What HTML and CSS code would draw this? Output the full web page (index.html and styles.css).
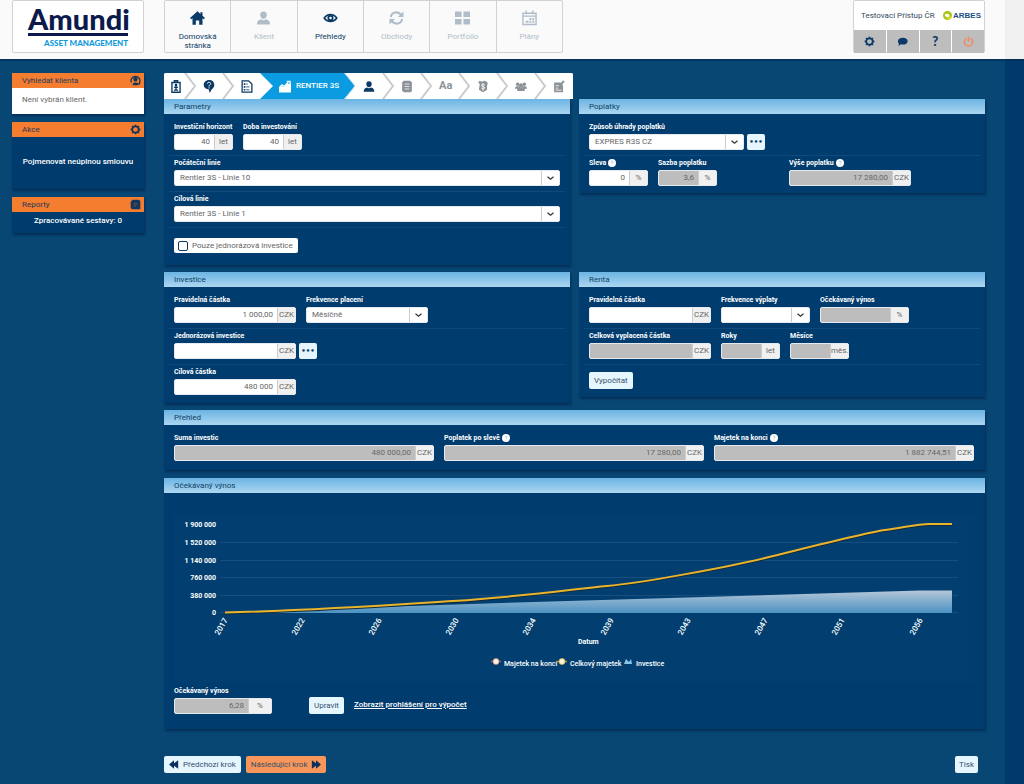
FILE: index.html
```html
<!DOCTYPE html>
<html lang="cs">
<head>
<meta charset="utf-8">
<meta name="viewport" content="width=device-width, initial-scale=1">
<title>Rentier 3S – Amundi</title>
<link rel="stylesheet" href="styles.css">
</head>
<body>
<svg class="defs" aria-hidden="true">
  <symbol id="down" viewBox="0 0 8 8"><path d="M1 2.800 4 5.300 7 2.800" fill="none" stroke="currentColor" stroke-width="1.200"/></symbol>
  <symbol id="gear" viewBox="0 0 16 16"><circle cx="8" cy="8" r="4.600" fill="none" stroke="currentColor" stroke-width="2.400"/><path d="M8 1v3M8 12v3M1 8h3M12 8h3M3 3l2 2M11 11l2 2M13 3l-2 2M3 13l2-2" stroke="currentColor" stroke-width="2.600" fill="none"/></symbol>
  <symbol id="person" viewBox="0 0 16 16"><path d="M8 1c2.300 0 3.800 1.600 3.600 3.900C11.400 7.300 10 9 8 9S4.600 7.300 4.400 4.900C4.200 2.600 5.700 1 8 1zM1 15c0-3.500 1.200-4.900 4.300-5.700 1.500 1.300 3.900 1.300 5.400 0C13.800 10.100 15 11.500 15 15z" fill="currentColor"/></symbol>
  <symbol id="help" viewBox="0 0 8 8"><circle cx="4" cy="4" r="4" fill="#fff"/><path d="M2.900 3.200c0-1.700 2.300-1.500 2.200-.1C5 3.900 4 3.900 4 4.800M4 5.600v.7" fill="none" stroke="#9db2c8" stroke-width=".7"/></symbol>
  <symbol id="chev" viewBox="0 0 13 26"><path d="M1 0 11 13 1 26" fill="none" stroke="#c9cccf" stroke-width="2"/></symbol>
  <symbol id="rewind" viewBox="0 0 12 10"><path d="M6 0v3.500L11 0v10L6 6.500V10L0 5z" fill="currentColor"/></symbol>
  <symbol id="forward" viewBox="0 0 12 10"><path d="M6 0v3.500L1 0v10l5-3.500V10l6-5z" fill="currentColor"/></symbol>
</svg>

<div class="page">
  <header class="top">
    <a class="logo" href="#"><span class="logo-name">Amundi</span><span class="logo-sub">ASSET MANAGEMENT</span></a>
    <nav class="nav">
      <a href="#"><svg viewBox="0 0 18 16"><path d="M9 0 0 8l1.500 1.500L3 8.200V16h4v-5h4v5h4V8.200l1.500 1.300L18 8l-3-2.700V1h-2.500v2.200z" fill="currentColor"/></svg>Domovská<br>stránka</a>
      <a class="off" href="#"><svg><use href="#person"/></svg>Klient</a>
      <a href="#"><svg viewBox="0 0 18 16"><path d="M1.500 8C5 2.500 13 2.500 16.500 8 13 13.500 5 13.500 1.500 8z" fill="none" stroke="currentColor" stroke-width="2"/><circle cx="9" cy="8" r="3.700" fill="currentColor"/><circle cx="9" cy="8" r="1.500" fill="#fff"/></svg>Přehledy</a>
      <a class="off" href="#"><svg viewBox="0 0 16 16"><path d="M2 7C2.600 1.500 9.500.500 13 4.500M14 9c-.600 5.500-7.500 6.500-11 2.500" fill="none" stroke="currentColor" stroke-width="2.200"/><path d="M15.500 1v6h-6zM.5 15V9h6z" fill="currentColor"/></svg>Obchody</a>
      <a class="off" href="#"><svg viewBox="0 0 16 16"><path d="M0 1h7v6H0zM9 1h7v6H9zM0 9h7v6H0zM9 9h7v6H9z" fill="currentColor"/></svg>Portfolio</a>
      <a class="off" href="#"><svg viewBox="0 0 16 16"><path d="M1 3h14v12H1zM1 6h14M4.500 0v4M11.500 0v4" fill="none" stroke="currentColor" stroke-width="1.500"/><path d="M8 8h2v2H8zM11 8h2v2h-2zM8 11h2v2H8zM11 11h2v2h-2zM4 11h3v2H4z" fill="currentColor"/></svg>Plány</a>
    </nav>
    <div class="user">
      <div class="user-name"><span>Testovací Přístup ČR</span>
        <span class="arbes"><svg viewBox="0 0 10 10"><circle cx="5" cy="5" r="5" fill="#a9c51b"/><path d="M2 4C3 2.500 6 2.500 7 4.500c.3 1.200-.5 2.300-1.800 2.500C3.500 7 2 5.800 2 4z" fill="#fff"/><path d="M4.500 9.800C4.500 7 7 5.500 9.900 5.800 9.500 8.500 7.500 10 4.500 9.800z" fill="#d5dc2b"/></svg>ARBES</span></div>
      <div class="user-tools">
        <button aria-label="Nastavení"><svg><use href="#gear"/></svg></button>
        <button aria-label="Zprávy"><svg viewBox="0 0 16 16"><path d="M8.500 2.500c4 0 7 2.200 7 5s-3 5-7 5c-1 0-2-.1-2.800-.4C4.500 13.200 3 14 1.500 14c.8-.8 1.300-1.800 1.400-2.900C1.800 10.200 1.300 9 1.300 7.500c0-2.800 3.200-5 7.200-5z" fill="currentColor"/></svg></button>
        <button class="q" aria-label="Nápověda">?</button>
        <button class="power" aria-label="Odhlásit"><svg viewBox="0 0 16 16"><path d="M5 3.500a6 6 0 1 0 6 0M8 1v7" fill="none" stroke="currentColor" stroke-width="2.200"/></svg></button>
      </div>
    </div>
  </header>

  <div class="content">
    <aside class="side">
      <section class="box">
        <h2>Vyhledat klienta<svg viewBox="0 0 16 16"><path d="M2 11A6.500 6.500 0 1 1 14 11M14 9v4h-4" fill="none" stroke="currentColor" stroke-width="1.800"/><path d="M8 3c2 0 3 1.300 3 3s-1.200 3.500-3 3.500S5 7.700 5 6s1-3 3-3zM4 15c0-3 1-4 4-4s4 1 4 4z" fill="currentColor"/></svg></h2>
        <p class="find">Není vybrán klient.</p>
      </section>
      <section class="box">
        <h2>Akce<svg><use href="#gear"/></svg></h2>
        <p class="action">Pojmenovat neúplnou smlouvu</p>
      </section>
      <section class="box">
        <h2>Reporty<svg viewBox="0 0 16 16"><path d="M4 1h9l2 2v12H3l-2-2V4z" fill="currentColor"/><path d="M5 7h6M5 10h4" stroke="#8a5a45" stroke-width="1.200"/></svg></h2>
        <p class="report">Zpracovávané sestavy: 0</p>
      </section>
    </aside>

    <main class="main">
      <nav class="steps">
        <button aria-label="Klient"><svg class="ico" viewBox="0 0 14 16"><path d="M2 3h10v12H2zM5 3V1h4v2" fill="none" stroke="currentColor" stroke-width="1.700"/><circle cx="7" cy="6.300" r="1.700" fill="currentColor"/><path d="M4.500 9h5M7 7.500V12M4.500 12.500h5" stroke="currentColor" stroke-width="1.600"/></svg><svg class="chev"><use href="#chev"/></svg></button>
        <button aria-label="Dotazník"><svg class="ico" viewBox="0 0 14 16"><path d="M7 0c4 0 6.500 2.500 6.500 6S11 10.500 10 12l-2 4-1.500-4.500C3 11 .5 9 .5 6S3 0 7 0z" fill="currentColor"/><path d="M5 4.500c.2-2.500 4-2.300 4 0C9 6 7 6 7 8M7 9v1.400" fill="none" stroke="#fff" stroke-width="1.200"/></svg><svg class="chev"><use href="#chev"/></svg></button>
        <button class="before" aria-label="Modelace"><svg class="ico" viewBox="0 0 14 16"><path d="M1 1h8l4 4v10H1z" fill="none" stroke="currentColor" stroke-width="1.600"/><path d="M3 4h2v2H3zM3 7.500h2v2H3zM3 11h2v2H3z" fill="currentColor"/><path d="M6 5h2M6 8.500h4M6 12h4" stroke="currentColor"/></svg><svg class="chev" viewBox="0 0 13 26"><path d="M13 0v26H0L13 13 0 0z" fill="#0a9be0"/></svg></button>
        <button class="active"><svg class="ico" viewBox="0 0 14 14"><path d="M0 14V9l3-3 3 2 4-5 1.500 1L14 2v12z" fill="currentColor"/><path d="M0 8.500 3.500 5 6 7l5.500-6M9 .8h4v4" fill="none" stroke="currentColor" stroke-width="1.300"/></svg><span>RENTIER 3S</span><svg class="chev" viewBox="0 0 13 26"><path d="M0 0h13v26H0L11 13z" fill="#fff"/><path d="m1 0 10 13L1 26" fill="none" stroke="#c4dceb"/></svg></button>
        <button aria-label="Osoba"><svg class="ico"><use href="#person"/></svg><svg class="chev"><use href="#chev"/></svg></button>
        <button class="off" aria-label="Dokument"><svg class="ico" viewBox="0 0 14 16"><path d="M3 1h8l2 2v10l-1 2H3l-2-2V3z" fill="currentColor"/><path d="M4 5h6M4 8h6M4 11h6" stroke="#fff" stroke-width=".9"/></svg><svg class="chev"><use href="#chev"/></svg></button>
        <button class="off"><span class="aa">Aa</span><svg class="chev"><use href="#chev"/></svg></button>
        <button class="off" aria-label="Platba"><svg class="ico" viewBox="0 0 14 16"><path d="M3 5 1 3l2-2 3 1 2-1 4 1 1 3-1 1v6l-5 3-5-3z" fill="currentColor"/><path d="M9 6C8 4.700 5 5 5.200 6.700 5.500 8.500 9 7.500 9 9.700 9 11.200 6 11.400 5 10M7 4v9" fill="none" stroke="#fff" stroke-width="1.100"/></svg><svg class="chev"><use href="#chev"/></svg></button>
        <button class="off" aria-label="Osoby"><svg class="ico" viewBox="0 0 16 16"><circle cx="3.500" cy="5" r="2.300" fill="currentColor"/><circle cx="12.500" cy="5" r="2.300" fill="currentColor"/><circle cx="8" cy="6.500" r="2.800" fill="currentColor"/><path d="M0 11c0-3 2-3.500 5-3.200 2 2 4 2 6 0 3-.3 5 .2 5 3.200h-3v3H3v-3z" fill="currentColor"/></svg><svg class="chev"><use href="#chev"/></svg></button>
        <button class="off" aria-label="Podpis"><svg class="ico" viewBox="0 0 14 16"><path d="M1 3h8l3 4v8H1z" fill="currentColor"/><path d="m6 10 7-9" stroke="currentColor" stroke-width="2.500"/><path d="M3 7h4M3 10h3M3 12.500h7" stroke="#fff"/></svg></button>
      </nav>

      <div class="panels">
        <section class="panel">
          <h2>Parametry</h2>
          <div class="row">
            <div class="field w-s"><label for="hor">Investiční horizont</label><div class="group"><input id="hor" value="40"><span>let</span></div></div>
            <div class="field w-s"><label for="doba">Doba investování</label><div class="group"><input id="doba" value="40"><span>let</span></div></div>
          </div>
          <div class="row">
            <div class="field w-full"><label for="poc">Počáteční linie</label><div class="select"><select id="poc"><option>Rentier 3S - Linie 10</option></select><svg><use href="#down"/></svg></div></div>
          </div>
          <div class="row">
            <div class="field w-full"><label for="cil">Cílová linie</label><div class="select"><select id="cil"><option>Rentier 3S - Linie 1</option></select><svg><use href="#down"/></svg></div></div>
          </div>
          <label class="check"><input type="checkbox">Pouze jednorázová investice</label>
        </section>
        <section class="panel">
          <h2>Poplatky</h2>
          <div class="row">
            <div class="field w-xl"><label for="zpu">Způsob úhrady poplatků</label><div class="select"><select id="zpu"><option>EXPRES R3S CZ</option></select><svg><use href="#down"/></svg></div></div>
            <button class="more" aria-label="Více">•••</button>
          </div>
          <div class="row">
            <div class="field w-s"><label for="sle">Sleva <svg><use href="#help"/></svg></label><div class="group"><input id="sle" value="0"><span>%</span></div></div>
            <div class="field w-s"><label for="saz">Sazba poplatku</label><div class="group"><input id="saz" value="3,6" readonly><span>%</span></div></div>
            <div class="field w-l skip"><label for="vys">Výše poplatku <svg><use href="#help"/></svg></label><div class="group"><input id="vys" value="17 280,00" readonly><span>CZK</span></div></div>
          </div>
        </section>
      </div>

      <div class="panels">
        <section class="panel end">
          <h2>Investice</h2>
          <div class="row">
            <div class="field w-l"><label for="pra">Pravidelná částka</label><div class="group"><input id="pra" value="1 000,00"><span>CZK</span></div></div>
            <div class="field w-l"><label for="fre">Frekvence placení</label><div class="select"><select id="fre"><option>Měsíčně</option></select><svg><use href="#down"/></svg></div></div>
          </div>
          <div class="row">
            <div class="field w-l"><label for="jed">Jednorázová investice</label><div class="group"><input id="jed"><span>CZK</span></div></div>
            <button class="more" aria-label="Více">•••</button>
          </div>
          <div class="row">
            <div class="field w-l"><label for="cca">Cílová částka</label><div class="group"><input id="cca" value="480 000"><span>CZK</span></div></div>
          </div>
        </section>
        <section class="panel">
          <h2>Renta</h2>
          <div class="row">
            <div class="field w-l"><label for="rpr">Pravidelná částka</label><div class="group"><input id="rpr"><span>CZK</span></div></div>
            <div class="field w-m"><label for="rfr">Frekvence výplaty</label><div class="select"><select id="rfr"><option></option></select><svg><use href="#down"/></svg></div></div>
            <div class="field w-m"><label for="roc">Očekávaný výnos</label><div class="group"><input id="roc" readonly><span>%</span></div></div>
          </div>
          <div class="row">
            <div class="field w-l"><label for="cel">Celková vyplacená částka</label><div class="group"><input id="cel" readonly><span>CZK</span></div></div>
            <div class="field w-s"><label for="rok">Roky</label><div class="group"><input id="rok" readonly><span>let</span></div></div>
            <div class="field w-s"><label for="mes">Měsíce</label><div class="group"><input id="mes" readonly><span>měs.</span></div></div>
          </div>
          <button class="btn calc">Vypočítat</button>
        </section>
      </div>

      <section class="panel sum">
        <h2>Přehled</h2>
        <div class="row">
          <div class="field grow"><label for="sum">Suma investic</label><div class="group"><input id="sum" value="480 000,00" readonly><span>CZK</span></div></div>
          <div class="field grow"><label for="pop">Poplatek po slevě <svg><use href="#help"/></svg></label><div class="group"><input id="pop" value="17 280,00" readonly><span>CZK</span></div></div>
          <div class="field grow"><label for="maj">Majetek na konci <svg><use href="#help"/></svg></label><div class="group"><input id="maj" value="1 882 744,51" readonly><span>CZK</span></div></div>
        </div>
      </section>

      <section class="panel yield">
        <h2>Očekávaný výnos</h2>
        <svg class="chart" viewBox="0 0 801 168" role="img" aria-label="Očekávaný výnos">
          <defs><linearGradient id="area" x1="0" y1="0" x2="0" y2="1"><stop offset="0" stop-color="#b4c6d8"/><stop offset="1" stop-color="#4b92c3"/></linearGradient></defs>
          <path class="grid" d="M46 28.500H784M46 46.500H784M46 63.500H784M46 81.500H784M46 98.500H784"/>
          <path d="M51 98 360 88 746 76.500H778V99H51z" fill="url(#area)"/>
          <path class="shadow" d="M51 99.500C150 97 202 93 279 88S400 76 433 73 550 55 591 45 690 20 711 17 745 11 755 11H778"/>
          <path class="line" d="M51 98.500C150 96 202 92 279 87S400 75 433 72 550 54 591 44 690 19 711 16 745 10 755 10H778"/>
          <g text-anchor="end"><text x="42" y="13">1 900 000</text><text x="42" y="31">1 520 000</text><text x="42" y="49">1 140 000</text><text x="42" y="66">760 000</text><text x="42" y="84">380 000</text><text x="42" y="101">0</text></g>
          <g class="years" text-anchor="end"><text transform="translate(54 106) rotate(-60)">2017</text><text transform="translate(131 106) rotate(-60)">2022</text><text transform="translate(208 106) rotate(-60)">2026</text><text transform="translate(285 106) rotate(-60)">2030</text><text transform="translate(362 106) rotate(-60)">2034</text><text transform="translate(440 106) rotate(-60)">2039</text><text transform="translate(517 106) rotate(-60)">2043</text><text transform="translate(594 106) rotate(-60)">2047</text><text transform="translate(671 106) rotate(-60)">2051</text><text transform="translate(749 106) rotate(-60)">2056</text></g>
          <text x="404" y="130">Datum</text>
          <path d="M317 147.500h10" stroke="#a45a3c" stroke-width="1.500"/><circle cx="322" cy="147.500" r="3" fill="#fff3ea" stroke="#c98a6c" stroke-width=".8"/>
          <text class="key" x="330" y="152">Majetek na konci</text>
          <path d="M383 147.500h10" stroke="#b99a2e" stroke-width="1.500"/><circle cx="388" cy="147.500" r="3" fill="#fff8d8" stroke="#d2b04a" stroke-width=".8"/>
          <text class="key" x="396" y="152">Celkový majetek</text>
          <path d="m450 150 2-5 3 3 2-3 1 5z" fill="#8cc4e8"/>
          <text class="key" x="462" y="152">Investice</text>
        </svg>
        <div class="row bottom">
          <div class="field w-yield"><label for="oce">Očekávaný výnos</label><div class="group"><input id="oce" value="6,28" readonly><span>%</span></div></div>
          <button class="btn edit">Upravit</button>
          <a class="link" href="#">Zobrazit prohlášení pro výpočet</a>
        </div>
      </section>

      <footer class="foot">
        <button class="btn"><svg><use href="#rewind"/></svg>Předchozí krok</button>
        <button class="btn next">Následující krok<svg><use href="#forward"/></svg></button>
        <button class="btn print">Tisk</button>
      </footer>
    </main>
  </div>
</div>
<div class="gutter"></div>
</body>
</html>
```
FILE: styles.css
```css
* { box-sizing: border-box; }
body {
  margin: 0;
  min-height: 100vh;
  display: flex;
  background: #003a6c;
  font: 8px/12px Roboto, sans-serif;
  color: #fff;
}
h2, p { margin: 0; font-size: 8px; font-weight: 400; }
button, input, select { font: inherit; margin: 0; }
button { cursor: pointer; border: 0; padding: 0; white-space: nowrap; }
svg { display: block; flex: none; }
.defs { position: absolute; width: 0; height: 0; }
.page { flex: 1; min-width: 0; background: #084674; }
.gutter { width: 19px; background: linear-gradient(#f0f0f0 59px, #02325c 59px, #02325c 61px, #003a6c 61px); }

.top {
  display: flex;
  gap: 20px;
  height: 61px;
  padding: 0 20px 0 12px;
  background: #fafafa;
  border-bottom: 2px solid #06365f;
  align-items: flex-start;
}
.logo, .nav, .user { border: 1px solid #d2d2d2; border-radius: 2px; height: 53px; }
.logo {
  width: 132px;
  padding: 3px 15px 0;
  background: #fff;
  text-decoration: none;
  display: flex;
  flex-direction: column;
}
.logo-name { font: 900 29px/29px Lato, sans-serif; color: #0b1a4a; border-bottom: 3px solid #0b1a4a; }
.logo-sub { font: 900 8px/14px Lato, sans-serif; color: #109bdc; text-align: right; white-space: nowrap; }
.nav { display: flex; width: 399px; }
.nav a {
  flex: 1;
  display: flex;
  flex-direction: column;
  align-items: center;
  padding-top: 9px;
  line-height: 9px;
  text-align: center;
  color: #0b3a66;
  text-decoration: none;
}
.nav a + a { border-left: 1px solid #d2d2d2; }
.nav svg { width: 15px; height: 16px; margin-bottom: 6px; }
.nav .off { color: #b0bdc9; }
.user { width: 132px; margin-left: auto; background: #fff; color: #34495e; }
.user-name { display: flex; align-items: center; justify-content: space-between; height: 29px; padding: 0 3px 0 7px; white-space: nowrap; }
.arbes { display: flex; align-items: center; gap: 1px; font: 700 8px/10px "Liberation Sans", sans-serif; color: #1d4f80; }
.arbes svg { width: 9px; height: 9px; }
.user-tools { display: grid; grid-template-columns: repeat(4, 1fr); gap: 1px; }
.user-tools button { height: 23px; background: #bdbdbd; color: #0b3a66; display: flex; align-items: center; justify-content: center; }
.user-tools svg { width: 11px; height: 11px; }
.user-tools .q { font: 900 13px/13px Lato, sans-serif; }
.user-tools .power { color: #ef8a5c; }

.content { display: flex; gap: 20px; padding: 12px 20px 13px 12px; }
.side { width: 132px; flex: none; display: flex; flex-direction: column; gap: 8px; }
.box { background: #003b6d; box-shadow: 1px 2px 2px #053056; }
.box h2 { display: flex; justify-content: space-between; align-items: center; height: 15px; padding: 0 3px 0 10px; background: #f47d30; color: #1d3a5c; }
.box h2 svg { width: 11px; height: 11px; color: #12365c; }
.find { background: #fff; color: #666; padding: 6px 10px 8px; }
.action { padding: 19px 0 21px; text-align: center; }
.report { padding: 3px 0 6px; text-align: center; }
.box .action, .box .report { font-weight: 500; }

.main { flex: 1; min-width: 0; }
.steps { display: flex; width: 409px; height: 26px; background: #fff; border-radius: 2px 2px 0 0; overflow: hidden; }
.steps button { display: flex; align-items: center; justify-content: space-between; flex: 0 0 38px; padding-left: 6px; background: #fff; color: #0b3a66; }
.steps button:first-child { flex-basis: 33px; }
.steps .ico { width: 12px; height: 13px; }
.steps .chev { width: 13px; height: 26px; }
.steps .off { color: #8c9297; }
.steps .active { flex-basis: 84px; background: #0a9be0; color: #fff; font-weight: 500; }
.aa { font: 700 11px/14px Roboto, sans-serif; }

.panels { display: grid; grid-template-columns: 1fr 1fr; gap: 9px; align-items: start; margin-bottom: 7px; }
.panel { background: #003c6e; box-shadow: 1px 2px 2px #053056; padding-bottom: 1px; }
.panel h2 { height: 15px; line-height: 15px; padding-left: 10px; margin-bottom: 6px; color: #0d4166; background: linear-gradient(#6bb4e2, #acd6f1); }
.panel.end { padding-bottom: 2px; }
.row { display: flex; gap: 10px; margin: 0 5px; padding: 2px 5px 5px; border-bottom: 1px solid #0e4a7c; }
.row:last-child { border-bottom-color: transparent; }
.field { min-width: 0; }
.field label { display: flex; align-items: center; gap: 2px; height: 10px; margin-bottom: 2px; font: 700 7px/10px Roboto, sans-serif; white-space: nowrap; }
.field label svg { width: 8px; height: 8px; }
.w-s { width: 59px; }
.w-m { width: 89px; }
.w-l { width: 122px; }
.w-xl { width: 155px; }
.w-yield { width: 98px; }
.w-full, .grow { flex: 1; }
.skip { margin-left: 62px; }
.group, .select { display: flex; height: 16px; border-radius: 2px; overflow: hidden; background: #fff; color: #666; border: 1px solid #e6eaee; }
.group input { flex: 1; min-width: 0; border: 0; padding: 0 4px 0 0; text-align: right; color: #666; background: #fff; }
.group input:read-only { background: #bdbdbd; }
.group span { width: 18px; text-align: center; line-height: 14px; background: #f0f0f0; border-left: 1px solid #ccc; }
.w-yield .group span { width: 23px; }
.select { position: relative; }
.select select { flex: 1; width: 100%; border: 0; padding: 0 20px 0 5px; appearance: none; background: #fff; color: #666; border-radius: 2px; }
.select svg { position: absolute; right: 0; top: 0; width: 18px; height: 14px; padding: 3px 4px; border-left: 1px solid #ccc; pointer-events: none; color: #333; }
.more { align-self: flex-end; width: 18px; height: 16px; margin-left: -7px; border-radius: 2px; background: #e6f4fc; color: #0b3a66; font: 700 7px/16px "DejaVu Sans", sans-serif; }
.btn { display: flex; align-items: center; gap: 4px; height: 17px; padding: 0 5px; border-radius: 2px; background: #e6f6fe; color: #34506b; }
.btn svg { width: 10px; height: 9px; color: #0b2f5c; }
.check { display: inline-flex; align-items: center; gap: 4px; height: 15px; margin: 10px 10px 11px; padding: 0 5px 0 4px; border-radius: 2px; background: #fff; color: #666; vertical-align: top; }
.check input { appearance: none; width: 10px; height: 10px; border: 1px solid #0b3a66; border-radius: 2px; background: #fff; }
.calc { margin: 7px 10px; }
.sum { margin-bottom: 8px; padding-bottom: 3px; }
.sum .row { padding-right: 6px; }

.yield { padding-bottom: 9px; }
.chart { width: calc(100% - 20px); height: auto; margin: 21px 10px 2px; font: 700 7px Roboto, sans-serif; background: #023f70; }
.chart text { fill: #fff; }
.chart .key { font-weight: 500; }
.chart .grid { stroke: #174e7b; fill: none; }
.chart .line { stroke: #eab32c; fill: none; stroke-width: 2; }
.chart .shadow { stroke: #112c3c; fill: none; stroke-width: 2; }
.chart .years { font: 500 8px Roboto, sans-serif; }
.bottom { align-items: flex-end; }
.edit { margin-left: 27px; }
.link { color: #fff; font-weight: 500; line-height: 18px; text-decoration: underline; }
.foot { display: flex; gap: 5px; margin-top: 27px; }
.foot .next { background: #f6965a; }
.foot .print { margin-left: auto; margin-right: 7px; padding: 0 4px; }
```
